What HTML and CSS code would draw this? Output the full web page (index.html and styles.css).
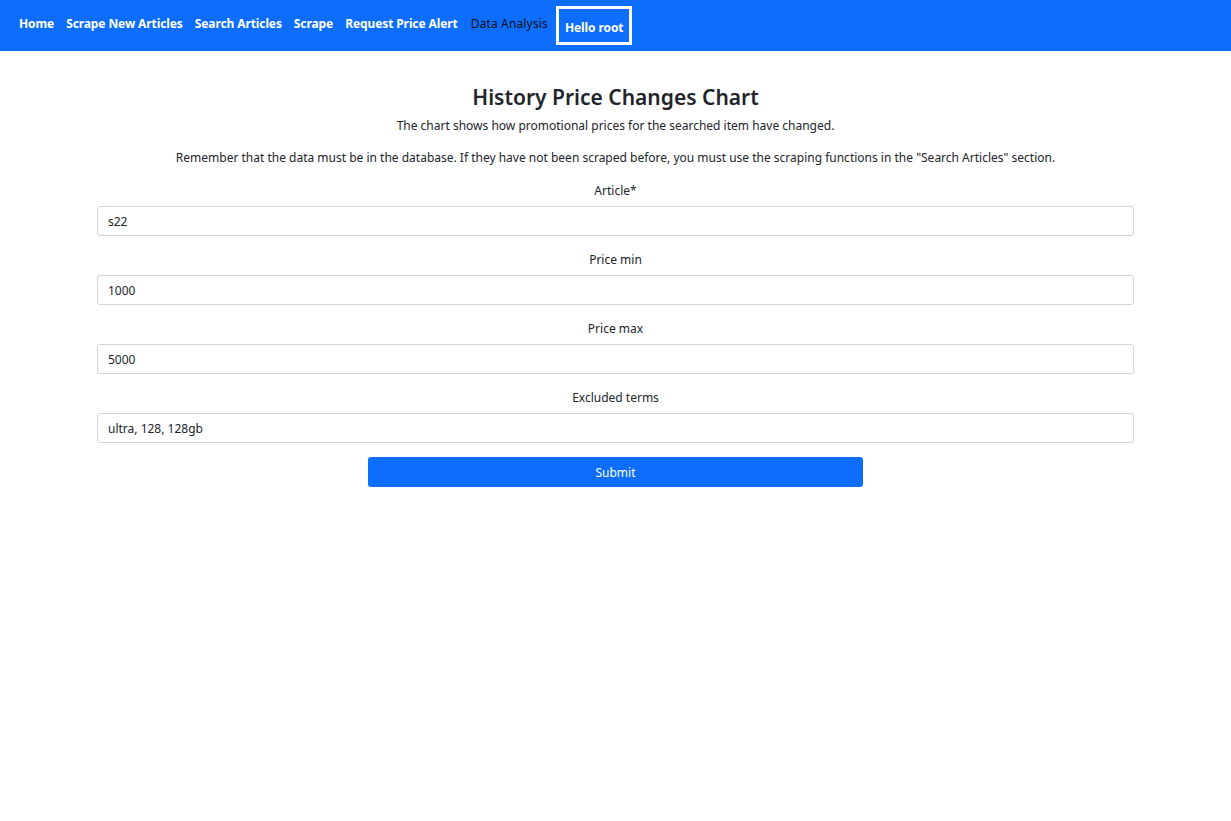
FILE: index.html
```html
<!DOCTYPE html>
<html lang="en">
<head>
<meta charset="utf-8">
<title>History Price Changes Chart</title>
<link rel="stylesheet" href="styles.css">
</head>
<body>
<nav class="navbar">
  <a class="nav-link" href="#">Home</a>
  <a class="nav-link" href="#">Scrape New Articles</a>
  <a class="nav-link" href="#">Search Articles</a>
  <a class="nav-link" href="#">Scrape</a>
  <a class="nav-link" href="#">Request Price Alert</a>
  <a class="nav-link nav-current" href="#">Data Analysis</a>
  <span class="nav-user">Hello root</span>
</nav>
<main class="content">
  <h1 class="title">History Price Changes Chart</h1>
  <p class="lead">The chart shows how promotional prices for the searched item have changed.</p>
  <p class="note">Remember that the data must be in the database. If they have not been scraped before, you must use the scraping functions in the "Search Articles" section.</p>
  <form class="form">
    <div class="field">
      <label class="label">Article*</label>
      <input class="input" type="text" value="s22">
    </div>
    <div class="field">
      <label class="label">Price min</label>
      <input class="input" type="text" value="1000">
    </div>
    <div class="field">
      <label class="label">Price max</label>
      <input class="input" type="text" value="5000">
    </div>
    <div class="field">
      <label class="label">Excluded terms</label>
      <input class="input" type="text" value="ultra, 128, 128gb">
    </div>
    <button class="submit" type="button">Submit</button>
  </form>
</main>
</body>
</html>
```
FILE: styles.css
```css
* { box-sizing: border-box; }
html, body { margin: 0; padding: 0; background: #fff; }
body {
  font-family: "Noto Sans", "Open Sans", sans-serif;
  font-size: 12px;
  color: #212529;
}
.navbar {
  height: 51px;
  background: #0d6efd;
  display: flex;
  align-items: center;
  padding-left: 19px;
  gap: 12px;
}
.nav-link {
  color: #fff;
  text-decoration: none;
  font-weight: 700;
  font-size: 12px;
  line-height: 18px;
  letter-spacing: -0.1px;
  margin-bottom: 4px;
}
.nav-current {
  color: #111;
  font-weight: 400;
  letter-spacing: 0.15px;
  margin-left: 1px;
}
.nav-user {
  color: #fff;
  font-weight: 700;
  font-size: 12px;
  letter-spacing: -0.1px;
  border: 3px solid #fff;
  height: 39px;
  display: flex;
  align-items: center;
  padding: 3px 6px 0;
  margin-left: -4px;
}
.content {
  width: 1037px;
  margin: 0 auto;
  text-align: center;
  padding-top: 32px;
}
.title {
  font-size: 21px;
  font-weight: 600;
  line-height: 28px;
  margin: 0;
}
.lead, .note {
  margin: 0;
  line-height: 18px;
}
.lead { margin-top: 6px; }
.note { margin-top: 14px; }
.form {
  display: flex;
  flex-direction: column;
  align-items: center;
  margin: 0;
}
.field {
  width: 100%;
  display: flex;
  flex-direction: column;
}
.label {
  line-height: 18px;
  margin-top: 15px;
  margin-bottom: 6px;
}
.input {
  width: 100%;
  height: 30px;
  border: 1px solid #ced4da;
  border-radius: 3px;
  padding: 0 10px;
  font-family: inherit;
  font-size: 12px;
  color: #212529;
}
.submit {
  margin-top: 14px;
  width: 495px;
  height: 30px;
  background: #0d6efd;
  color: #fff;
  border: none;
  border-radius: 3px;
  font-family: inherit;
  font-size: 12px;
}
```
